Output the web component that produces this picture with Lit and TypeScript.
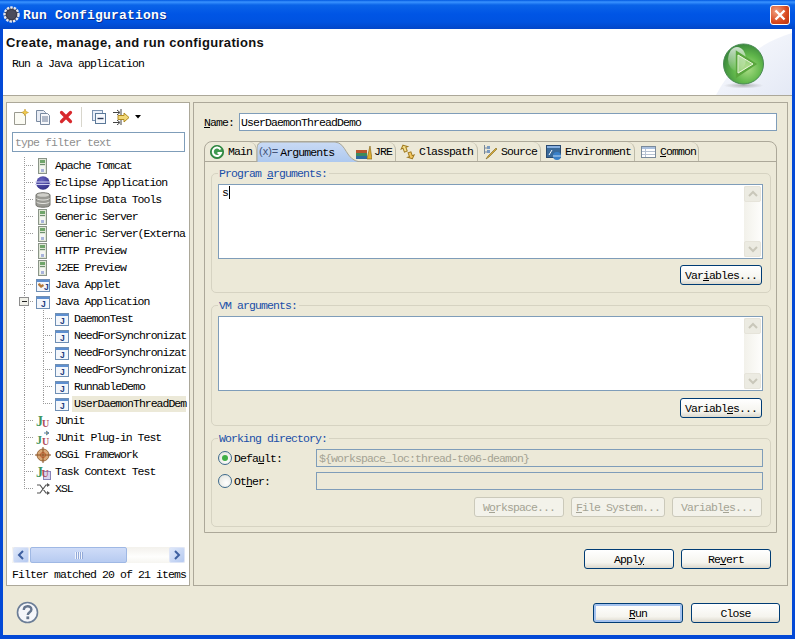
import { LitElement, html, css, svg } from "lit";
import { customElement } from "lit/decorators.js";

const mn = (s: string) => {
  const i = s.indexOf("&");
  if (i < 0) return s;
  return html`${s.slice(0, i)}<u>${s[i + 1]}</u>${s.slice(i + 2)}`;
};

const S = (body: unknown, w = 16, h = 16) =>
  html`<svg class="ico" width=${w} height=${h} viewBox="0 0 ${w} ${h}" aria-hidden="true">${body}</svg>`;

const server = S(svg`
  <rect x="3.5" y="0.5" width="8" height="15" fill="#dfe6d6" stroke="#8a9488"/>
  <rect x="5" y="2" width="5" height="3" fill="#6fa56a"/>
  <rect x="5" y="6" width="5" height="1" fill="#6d8f70"/>
  <rect x="5" y="8" width="5" height="6" fill="#f4f6f2"/>
  <rect x="6" y="11" width="3" height="3" fill="#a9b4dc"/>`);
const eclipse = S(svg`
  <defs><radialGradient id="ec" cx=".4" cy=".3" r=".8"><stop offset="0" stop-color="#6a66c0"/><stop offset="1" stop-color="#2c2a80"/></radialGradient></defs>
  <circle cx="8" cy="8" r="6.8" fill="url(#ec)"/>
  <path d="M0 7h16M0 9.5h16" stroke="#cfd0f0" stroke-width="1"/>`);
const db = S(svg`
  <path d="M1 3c0-3 14-3 14 0v10c0 3-14 3-14 0z" fill="#9a9a94" stroke="#75756f"/>
  <ellipse cx="8" cy="3" rx="6" ry="1.8" fill="#d0d0ca"/>
  <path d="M1.5 6.5c2 2 11 2 13 0M1.5 10c2 2 11 2 13 0" fill="none" stroke="#e4e4df"/>`);
const jdoc = S(svg`
  <rect x="1.5" y="2.5" width="13" height="12" fill="#f3f6fb" stroke="#6f8fb4"/>
  <rect x="2" y="3" width="12" height="2" fill="#5e8fd0"/>
  <text x="6" y="13" font-family="Liberation Sans" font-weight="700" font-size="8.5" fill="#1f3f80">J</text>`);
const applet = S(svg`
  <rect x="1.5" y="2.5" width="13" height="12" fill="#f3f6fb" stroke="#6f8fb4"/>
  <rect x="2" y="3" width="12" height="2" fill="#5e8fd0"/>
  <path d="M3 7l2-1 1 2 2-1 1 2-3 2-3-3z" fill="#b5793a"/>
  <text x="9" y="13" font-family="Liberation Sans" font-weight="700" font-size="8.5" fill="#1f3f80">J</text>`);
const junit = S(svg`
  <text x="1" y="13" font-family="Liberation Serif" font-weight="700" font-size="14" fill="#3f9560">J</text>
  <text x="7" y="14" font-family="Liberation Serif" font-weight="700" font-size="10" fill="#b04a5a">U</text>`);
const junitPlug = S(svg`
  <path d="M9 3h4M11 1l3 2-3 2" fill="#e0b040" stroke="#5080b0" stroke-width="1"/>
  <text x="1" y="14" font-family="Liberation Serif" font-weight="700" font-size="12" fill="#3f9560">J</text>
  <text x="7" y="15" font-family="Liberation Serif" font-weight="700" font-size="10" fill="#b04a5a">U</text>`);
const osgi = S(svg`
  <circle cx="8" cy="8" r="6" fill="#d9a877" stroke="#9a6a3c"/>
  <path d="M8 0v16M0 8h16" stroke="#8a4f20"/>
  <circle cx="8" cy="8" r="2.5" fill="none" stroke="#b5582a"/>`);
const task = S(svg`
  <rect x="8.5" y="7.5" width="7" height="8" fill="#d8d4ee" stroke="#8a84b8"/>
  <text x="1" y="13" font-family="Liberation Serif" font-weight="700" font-size="14" fill="#3f9560">J</text>
  <text x="6.5" y="13" font-family="Liberation Serif" font-weight="700" font-size="10" fill="#b04a5a">U</text>`);
const xsl = S(svg`
  <path d="M2 4l3 0 6 8 3 0M2 12l3 0 6-8 3 0" fill="none" stroke="#555" stroke-width="1.2"/>
  <path d="M12 2l3 2-3 2zM12 10l3 2-3 2z" fill="#555"/>`);

type Row = { label: string; icon: unknown; depth: number; last?: boolean; open?: boolean; sel?: boolean };
const rows: Row[] = [
  { label: "Apache Tomcat", icon: server, depth: 0 },
  { label: "Eclipse Application", icon: eclipse, depth: 0 },
  { label: "Eclipse Data Tools", icon: db, depth: 0 },
  { label: "Generic Server", icon: server, depth: 0 },
  { label: "Generic Server(Externa", icon: server, depth: 0 },
  { label: "HTTP Preview", icon: server, depth: 0 },
  { label: "J2EE Preview", icon: server, depth: 0 },
  { label: "Java Applet", icon: applet, depth: 0 },
  { label: "Java Application", icon: jdoc, depth: 0, open: true },
  { label: "DaemonTest", icon: jdoc, depth: 1 },
  { label: "NeedForSynchronizat", icon: jdoc, depth: 1 },
  { label: "NeedForSynchronizat", icon: jdoc, depth: 1 },
  { label: "NeedForSynchronizat", icon: jdoc, depth: 1 },
  { label: "RunnableDemo", icon: jdoc, depth: 1 },
  { label: "UserDaemonThreadDem", icon: jdoc, depth: 1, last: true, sel: true },
  { label: "JUnit", icon: junit, depth: 0 },
  { label: "JUnit Plug-in Test", icon: junitPlug, depth: 0 },
  { label: "OSGi Framework", icon: osgi, depth: 0 },
  { label: "Task Context Test", icon: task, depth: 0 },
  { label: "XSL", icon: xsl, depth: 0, last: true },
];

const connector = (r: Row) => {
  const w = r.depth ? 42 : 23;
  return html`<svg class="ico" width=${w} height="17" aria-hidden="true" shape-rendering="crispEdges">
    ${r.depth
      ? svg`<path d="M12.5 0V17M31.5 0V${r.last ? 9 : 17}M31 8.5H41" stroke="#9a9a9a" stroke-dasharray="1 1" fill="none"/>`
      : svg`<path d="M12.5 0V${r.last ? 9 : 17}M12 8.5H22" stroke="#9a9a9a" stroke-dasharray="1 1" fill="none"/>`}
    ${r.open
      ? svg`<rect x="7.5" y="4.5" width="9" height="8" fill="#f1f1ea" stroke="#8d8d8d"/><path d="M9.5 8.5h5" stroke="#222"/>`
      : ""}
  </svg>`;
};

type Tab = { label: string; w: number; pad: number; icon: unknown; gap: number; sel?: boolean };
const tabs: Tab[] = [
  { label: "Main", w: 52, pad: 4, gap: 3, icon: S(svg`<circle cx="8" cy="8" r="7" fill="#3f9a4f"/><circle cx="8" cy="8" r="6.2" fill="none" stroke="#2a7a3c"/><path d="M11.5 5.5A4.2 4.2 0 1 0 12 9H8.5" fill="none" stroke="#fff" stroke-width="2"/>`) },
  { label: "Arguments", w: 99, pad: 2, gap: 2, sel: true, icon: html`<span class="xeq">(x)=</span>` },
  { label: "JRE", w: 40, pad: 0, gap: 2, icon: S(svg`<rect x="0" y="6" width="11" height="3" fill="#b8552e"/><rect x="0" y="9" width="11" height="3" fill="#3d8a5c"/><rect x="0" y="12" width="11" height="3" fill="#2d6aa0"/><path d="M11 15L14 2l2 13z" fill="#e0b030" stroke="#7a5a10" stroke-width=".6"/>`) },
  { label: "Classpath", w: 82, pad: 4, gap: 3, icon: S(svg`<path d="M3 1l4 3-2 0 0 4-3 0 0-4-2 0z" transform="translate(1 0) rotate(-20 3 4)" fill="#f4e08c" stroke="#a07a20"/><path d="M11 15l-4-3 2 0 0-4 3 0 0 4 2 0z" transform="rotate(-20 11 11)" fill="#f4c860" stroke="#a07a20"/>`) },
  { label: "Source", w: 63, pad: 5, gap: 2, icon: S(svg`<path d="M1.5 1v9M1.5 4h3M1.5 8h3" stroke="#7a8a9a" fill="none"/><rect x="4" y="2" width="3" height="3" fill="#7a9ac0"/><rect x="4" y="6" width="3" height="3" fill="#7a9ac0"/><path d="M3 15l2-3 8-8 1 1-8 8z" fill="#d8a838" stroke="#7a6a20" stroke-width=".6"/>`) },
  { label: "Environment", w: 94, pad: 5, gap: 3, icon: S(svg`<rect x="0.5" y="1.5" width="14" height="12" fill="#3a6a9a" stroke="#2a4a70"/><rect x="1" y="2" width="13" height="2" fill="#88b0e0"/><path d="M3 11l3-5" stroke="#fff"/><circle cx="11" cy="12" r="4" fill="#3a80c8"/><path d="M7 12h8" stroke="#bcd8f4"/>`) },
  { label: "&Common", w: 64, pad: 6, gap: 3, icon: S(svg`<rect x="0.5" y="2.5" width="14" height="11" fill="#fff" stroke="#7a8a9a"/><rect x="1" y="3" width="13" height="2" fill="#aac0de"/><path d="M1 7.5h13M1 10.5h13M4.5 5v8" stroke="#b6c2d2"/>`) },
];

const chevron = (d: "u" | "d" | "l" | "r", color: string) => {
  const p = { u: "M3 9l4-4 4 4", d: "M3 5l4 4 4-4", l: "M9 3L5 7l4 4", r: "M5 3l4 4-4 4" }[d];
  return html`<svg class="ico" width="14" height="14" viewBox="0 0 14 14" aria-hidden="true"><path d=${p} fill="none" stroke=${color} stroke-width="2"/></svg>`;
};

@customElement("app-root")
export class AppRoot extends LitElement {
  static styles = css`
    :host { display: block; width: 795px; height: 639px; overflow: hidden;
      font: 11.5px/14px "Liberation Mono", "Noto Sans CJK SC", monospace; letter-spacing: -0.9px; color: #000; }
    * { box-sizing: border-box; }
    u { text-decoration: underline; text-underline-offset: 1px; }
    .ico { display: block; flex: none; }
    .frame { width: 795px; height: 639px; display: flex; flex-direction: column; background: #0349d6; }
    .title { height: 29px; flex: none; display: flex; align-items: center; padding: 0 5px 0 3px; gap: 3px;
      background: linear-gradient(#0058e0 0, #3a93ff 2px, #0a64e8 5px, #0055e5 14px, #0053e0 22px, #0246c8 29px);
      color: #fff; font-weight: 700; font-size: 13px; letter-spacing: .2px; text-shadow: 1px 1px 0 #0a2f90; }
    .title .txt { flex: 1; margin-top: 2px; }
    .x { width: 20px; height: 20px; border: 1px solid #fff; border-radius: 3px; display: flex; align-items: center; justify-content: center;
      background: radial-gradient(circle at 30% 30%, #f0a080, #d8481e 60%, #b83410); margin-top: 1px; }
    .client { flex: 1; margin: 0 3px 4px; background: #ece9d8; display: flex; flex-direction: column; min-height: 0; }
    .banner { height: 67px; flex: none; background: #fff; border-bottom: 1px solid #aca899; position: relative; padding: 6px 3px 0; overflow: hidden; }
    .corner { position: absolute; right: 0; top: 0; }
    .play { position: absolute; left: 714px; top: 14px; }
    h1 { margin: 0; font: 700 13px/16px "Liberation Sans", sans-serif; letter-spacing: 0.33px; color: #111; }
    .sub { margin-top: 4px; padding-left: 6px; line-height: 16px; padding-top: 1px; }
    .panels { height: 484px; flex: none; margin-top: 6px; padding-left: 3px; display: flex; gap: 3px; }
    .left { width: 184px; border: 1px solid #aca899; background: #fff; display: flex; flex-direction: column; padding: 0 4px 0 5px; }
    .toolbar { height: 29px; flex: none; display: flex; align-items: center; padding-left: 1px; margin-top: -1px; }
    .sep { width: 1px; height: 20px; background: #d8d6cc; margin: 0 9px 0 7px; }
    .filter { height: 20px; flex: none; border: 1px solid #7f9db9; color: #8f8f8f; padding: 3px 2px 1px; line-height: 14px; white-space: pre; margin-top: 1px; }
    .tree { margin-top: 5px; height: 389px; flex: none; }
    .row { height: 17px; display: flex; align-items: center; white-space: pre; width: 174px; }
    .row .lbl { margin-left: 4px; flex: 1; min-width: 0; height: 16px; line-height: 16px; letter-spacing: -1px; }
    .row.child .lbl { margin-left: 2px; padding-left: 2px; }
    .row.sel .lbl { background: #ece9d8; }
    .hbar { height: 16px; flex: none; display: flex; align-items: stretch; gap: 1px; padding-left: 1px; margin-top: 1px;
      background: linear-gradient(#f3f1ec, #fefefd 60%, #f6f5f0); }
    .sb-btn { width: 16px; flex: none; border-radius: 2px; border: 1px solid #dfe6f7; background: linear-gradient(135deg, #dfe8fa, #b5c9f0); display: flex; align-items: center; justify-content: center; }
    .thumb { width: 97px; flex: none; border-radius: 2px; border: 1px solid #9fb8e4; background: linear-gradient(#cfdcf8, #b7cbf1); display: flex; align-items: center; justify-content: center; }
    .grip { width: 8px; height: 7px; background: repeating-linear-gradient(90deg, #f0f4fc 0 1px, #92a9d8 1px 2px); }
    .hbar .fill { flex: 1; }
    .status { height: 21px; flex: none; display: flex; align-items: center; white-space: pre; padding-top: 2px; }
    .right { width: 595px; border: 1px solid #aca899; padding: 10px 10px 0; display: flex; flex-direction: column; }
    .name { height: 18px; flex: none; display: flex; align-items: center; }
    .name span { width: 35px; flex: none; white-space: pre; padding-top: 1px; }
    .input { border: 1px solid #7f9db9; background: #fff; height: 18px; line-height: 16px; padding: 1px 2px 0 1px; flex: 1; white-space: pre; }
    .folder { margin-top: 10px; height: 392px; flex: none; border: 1px solid #aca899; border-radius: 8px 8px 0 0; display: flex; flex-direction: column; }
    .tabs { height: 20px; flex: none; display: flex; border-bottom: 1px solid #aca899; }
    .tab { display: flex; align-items: center; white-space: pre; border-right: 1px solid #bdbaa8; border-top-right-radius: 8px; flex: none; height: 19px; position: relative; }
    .tab > span { padding-top: 1px; }
    .tab.sel { border: 0; z-index: 1; height: 20px; margin-right: -4px; }
    .tab.sel > svg.bg { position: absolute; left: 0; top: 0; }
    .tab.sel > * { position: relative; }
    .tab > span.xeq { padding: 0 0 3px; color: #44557a; font-family: "Liberation Sans", sans-serif; font-size: 11px; letter-spacing: 0; }
    .body { padding: 11px 5px 0 6px; flex: 1; }
    .group { position: relative; border: 1px solid #d6d3c2; border-radius: 5px; padding: 10px 7px 0 6px; }
    .group + .group { margin-top: 12px; }
    .legend { position: absolute; left: 6px; top: -7px; background: #ece9d8; color: #1a4fa8; padding: 0 2px 0 1px; height: 14px; white-space: pre; }
    .g1 { height: 120px; } .g2 { height: 121px; } .g3 { height: 89px; }
    .area { height: 75px; border: 1px solid #7f9db9; background: #fff; display: flex; justify-content: space-between; padding: 1px 0 1px 3px; }
    .caret { display: inline-block; width: 1px; height: 13px; background: #000; vertical-align: -3px; margin-left: 1px; }
    .vbar { width: 17px; display: flex; flex-direction: column; justify-content: space-between; background: linear-gradient(90deg, #f2f1ea, #fdfdfb); margin-right: 1px; }
    .vbtn { height: 16px; border: 1px solid #e6e4da; border-radius: 2px; background: #ecebe2; display: flex; align-items: center; justify-content: center; }
    .btns { display: flex; justify-content: flex-end; gap: 7px; }
    .group .btns { margin-right: 1px; }
    .g1 .btns { margin-top: 6px; }
    .g2 .btns { margin-top: 7px; }
    .btn { width: 90px; height: 20px; border: 1px solid #003c74; border-radius: 3px; display: flex; align-items: center; justify-content: center; white-space: pre; padding-top: 1px;
      background: linear-gradient(#fff, #f5f4ee 70%, #dcd8cc); flex: none; }
    .btn.vars { width: 82px; }
    .btn.off { border-color: #cbc9ba; color: #a4a394; background: #f3f2ea; }
    .btn.run { box-shadow: inset 0 0 0 2px #a5c3ef; }
    .btn.close { width: 89px; }
    .wrow { display: flex; align-items: center; height: 18px; }
    .wrow + .wrow { margin-top: 5px; }
    .radio { width: 14px; height: 14px; flex: none; margin-right: 2px; border-radius: 50%; border: 1px solid #3d6a8c; background: radial-gradient(circle at 60% 65%, #fff, #dfe0d8); display: flex; align-items: center; justify-content: center; }
    .radio i { width: 6px; height: 6px; border-radius: 50%; background: #3fae45; }
    .wlabel { width: 82px; flex: none; white-space: pre; padding-top: 1px; }
    .dis { flex: 1; background: #ece9d8; color: #a4a394; padding-left: 2px; }
    .g3 .btns { margin-top: 7px; }
    .g3 .btn.f { width: 94px; }
    .actions { margin-top: 16px; margin-right: 6px; }
    .bottom { flex: 1; display: flex; justify-content: space-between; padding: 15px 12px 0 13px; }
    .bottom .btns { gap: 8px; padding-top: 2px; }
  `;

  render() {
    return html`<div class="frame">
      <div class="title">
        <svg class="ico" width="17" height="17" viewBox="0 0 17 17" aria-hidden="true">
          <circle cx="8.5" cy="8.5" r="7" fill="#3c3c4c" stroke="#e8e8ee" stroke-width="2.4" stroke-dasharray="2.5 1"/>
          <circle cx="8.5" cy="8.5" r="4.5" fill="#4c4c5c"/>
        </svg>
        <span class="txt">Run Configurations</span>
        <div class="x"><svg width="14" height="14" viewBox="0 0 14 14" aria-hidden="true"><path d="M2.5 2.5l9 9M11.5 2.5l-9 9" stroke="#fff" stroke-width="2.4"/></svg></div>
      </div>
      <div class="client">
        <div class="banner">
          <svg class="corner" width="90" height="66" viewBox="0 0 90 66" aria-hidden="true">
            <defs><linearGradient id="cg" x1="0" y1="0" x2="1" y2="1"><stop offset="0" stop-color="#fbfcff"/><stop offset="1" stop-color="#e4e9f5"/></linearGradient></defs>
            <path d="M90 4C62 12 30 34 14 66H90z" fill="url(#cg)"/>
          </svg>
          <svg class="play" width="54" height="52" viewBox="0 0 54 52" aria-hidden="true">
            <defs>
              <radialGradient id="pg" cx=".6" cy=".62" r=".62"><stop offset="0" stop-color="#a9dc84"/><stop offset=".55" stop-color="#62b84c"/><stop offset="1" stop-color="#3c8a3c"/></radialGradient>
              <linearGradient id="ph" x1="0" y1="0" x2="0" y2="1"><stop offset="0" stop-color="#fff" stop-opacity=".75"/><stop offset="1" stop-color="#fff" stop-opacity=".05"/></linearGradient>
              <radialGradient id="ps"><stop offset="0" stop-color="#888" stop-opacity=".6"/><stop offset="1" stop-color="#888" stop-opacity="0"/></radialGradient>
            </defs>
            <ellipse cx="26.5" cy="42.5" rx="20" ry="3" fill="url(#ps)"/>
            <circle cx="26.5" cy="21" r="20" fill="url(#pg)" stroke="#4a8a55"/>
            <ellipse cx="20" cy="16" rx="9" ry="12" fill="url(#ph)"/>
            <path d="M20 9.5L38 21 20 33z" fill="#cfe9b4" fill-opacity=".35" stroke="#5aa63e" stroke-width="2.4"/>
            <path d="M21 12L36 21 21 30z" fill="none" stroke="#e8f6da" stroke-width="1"/>
          </svg>
          <h1>Create, manage, and run configurations</h1>
          <div class="sub">Run a Java application</div>
        </div>
        <div class="panels">
          ${this.renderLeft()}
          ${this.renderRight()}
        </div>
        <div class="bottom">
          <svg class="ico" width="23" height="23" viewBox="0 0 23 23" aria-hidden="true">
            <circle cx="11.5" cy="11.5" r="10" fill="#f5f6fa" stroke="#6b7d96" stroke-width="1.6"/>
            <path d="M7.8 9c0-5 7.6-5 7.6-.5 0 2.8-3.6 2.8-3.6 5.5" fill="none" stroke="#66768e" stroke-width="2.4"/>
            <rect x="10.4" y="15.4" width="2.8" height="2.8" fill="#66768e"/>
          </svg>
          <div class="btns">
            <div class="btn run">${mn("&Run")}</div>
            <div class="btn close">Close</div>
          </div>
        </div>
      </div>
    </div>`;
  }

  renderLeft() {
    return html`<div class="left">
      <div class="toolbar">
        ${S(svg`<path d="M1.5 3.5h8l3 3v9h-11z" fill="#fbfbf4" stroke="#9a9a90"/><path d="M12 0l1 2.5 2.5 1-2.5 1-1 2.5-1-2.5-2.5-1 2.5-1z" fill="#f2c94c" stroke="#b8901c" stroke-width=".5"/>`)}
        <span style="width:6px"></span>
        ${S(svg`<path d="M1.5 1.5h7l2 2v9h-9z" fill="#e8ecf4" stroke="#7a8aa0"/><path d="M5.5 4.5h7l2 2v9h-9z" fill="#f7f8fb" stroke="#7a8aa0"/><path d="M7 8h6M7 10h6M7 12h6" stroke="#6a7a96"/>`)}
        <span style="width:7px"></span>
        ${S(svg`<path d="M3.5 3.5l9 9M12.5 3.5l-9 9" stroke="#d8282c" stroke-width="3.2" stroke-linecap="round"/>`)}
        <div class="sep"></div>
        ${S(svg`<rect x="1.5" y="1.5" width="10" height="10" fill="#e8eef8" stroke="#7a92b0"/><rect x="4.5" y="4.5" width="10" height="10" fill="#f6f8fc" stroke="#5a7898"/><path d="M6.5 9.5h6" stroke="#2a3a5a" stroke-width="1.4"/>`)}
        <span style="width:6px"></span>
        ${S(svg`<path d="M0 3.5h6M0 13.5h6M4 1l3 2.5-3 2.5M4 11l3 2.5-3 2.5M8 0v7M8 10v6" fill="none" stroke="#444"/><path d="M5 6.5h6v-2.5l5 4.5-5 4.5v-2.5h-6z" fill="#f2d878" stroke="#b08a20"/>`, 17, 16)}
        <svg class="ico" width="6" height="4" viewBox="0 0 6 4" style="margin-left:5px" aria-hidden="true"><path d="M0 0h6L3 3.5z" fill="#000"/></svg>
      </div>
      <div class="filter">type filter text</div>
      <div class="tree">
        ${rows.map(r => html`<div class="row ${r.depth ? "child" : ""} ${r.sel ? "sel" : ""}">
          ${connector(r)}${r.icon}<span class="lbl">${r.label}</span>
        </div>`)}
      </div>
      <div class="hbar">
        <div class="sb-btn">${chevron("l", "#3d5fa0")}</div>
        <div class="thumb"><div class="grip"></div></div>
        <div class="fill"></div>
        <div class="sb-btn">${chevron("r", "#3d5fa0")}</div>
      </div>
      <div class="status">Filter matched 20 of 21 items</div>
    </div>`;
  }

  renderTab(t: Tab) {
    return html`<div class="tab ${t.sel ? "sel" : ""}" style="width:${t.w + (t.sel ? 4 : 0)}px;padding-left:${t.pad}px">
      ${t.sel ? html`<svg class="bg" width="103" height="20" viewBox="0 0 103 20" aria-hidden="true">
        <defs><linearGradient id="tg" x1="0" y1="0" x2="0" y2="1"><stop offset="0" stop-color="#c9daf5"/><stop offset="1" stop-color="#aec9ef"/></linearGradient></defs>
        <path d="M0 20V6Q0 1 5 0H78C90 1 88 18 103 20z" fill="url(#tg)"/>
        <path d="M0 20V6Q0 1 5 0H78C90 1 88 18 103 20" fill="none" stroke="#a8a696"/>
      </svg>` : ""}
      ${t.icon}<span style="margin-left:${t.gap}px">${mn(t.label)}</span>
    </div>`;
  }

  area() {
    return html`<div class="vbar">
      <div class="vbtn">${chevron("u", "#c9c7ba")}</div>
      <div class="vbtn">${chevron("d", "#c9c7ba")}</div>
    </div>`;
  }

  renderRight() {
    return html`<div class="right">
      <div class="name"><span>${mn("&Name:")}</span><div class="input">UserDaemonThreadDemo</div></div>
      <div class="folder">
        <div class="tabs">${tabs.map(t => this.renderTab(t))}</div>
        <div class="body">
          <div class="group g1">
            <div class="legend">Program ${mn("&arguments:")}</div>
            <div class="area"><span>s<span class="caret"></span></span>${this.area()}</div>
            <div class="btns"><div class="btn vars">${mn("Var&iables...")}</div></div>
          </div>
          <div class="group g2">
            <div class="legend">VM arguments:</div>
            <div class="area"><span></span>${this.area()}</div>
            <div class="btns"><div class="btn vars">${mn("Variabl&es...")}</div></div>
          </div>
          <div class="group g3">
            <div class="legend">Working directory:</div>
            <div class="wrow"><div class="radio"><i></i></div><span class="wlabel">${mn("Defa&ult:")}</span><div class="input dis">\${workspace_loc:thread-t006-deamon}</div></div>
            <div class="wrow"><div class="radio"></div><span class="wlabel">${mn("Ot&her:")}</span><div class="input dis"></div></div>
            <div class="btns">
              <div class="btn off">${mn("W&orkspace...")}</div>
              <div class="btn off f">${mn("&File System...")}</div>
              <div class="btn off">${mn("Variabl&es...")}</div>
            </div>
          </div>
        </div>
      </div>
      <div class="btns actions">
        <div class="btn">${mn("Appl&y")}</div>
        <div class="btn">${mn("Re&vert")}</div>
      </div>
    </div>`;
  }
}
